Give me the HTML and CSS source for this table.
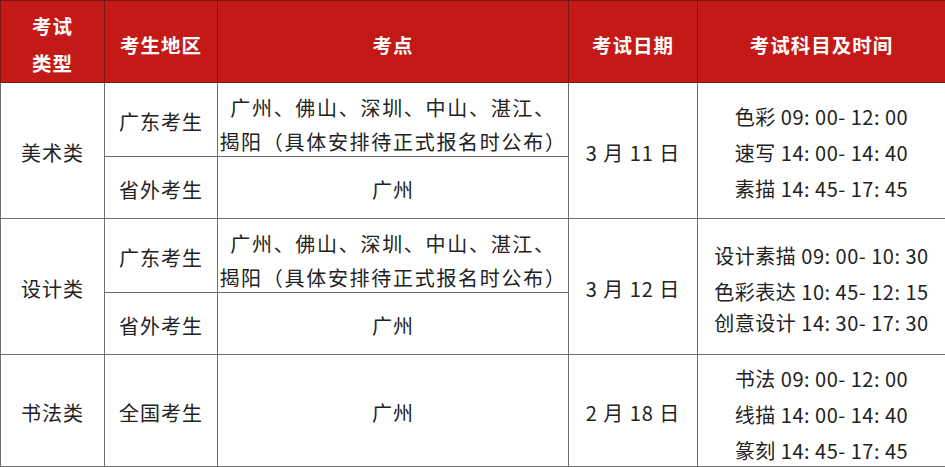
FILE: index.html
```html
<!DOCTYPE html>
<html lang="zh-CN">
<head>
<meta charset="utf-8">
<title>考试安排</title>
<link rel="stylesheet" href="styles.css">
</head>
<body>
<table class="exam">
  <colgroup>
    <col class="c1"><col class="c2"><col class="c3"><col class="c4"><col class="c5">
  </colgroup>
  <thead>
    <tr class="head">
      <th>考试<br>类型</th>
      <th>考生地区</th>
      <th>考点</th>
      <th>考试日期</th>
      <th>考试科目及时间</th>
    </tr>
  </thead>
  <tbody>
    <tr class="r-a">
      <td rowspan="2">美术类</td>
      <td>广东考生</td>
      <td class="place"><div class="pl">广州、佛山、深圳、中山、湛江、</div><div class="pl">揭阳（具体安排待正式报名时公布）</div></td>
      <td rowspan="2" class="date">3 月 11 日</td>
      <td rowspan="2" class="times">
        <div class="ln">色彩 09: 00- 12: 00</div>
        <div class="ln">速写 14: 00- 14: 40</div>
        <div class="ln">素描 14: 45- 17: 45</div>
      </td>
    </tr>
    <tr class="r-b">
      <td>省外考生</td>
      <td>广州</td>
    </tr>
    <tr class="r-a">
      <td rowspan="2">设计类</td>
      <td>广东考生</td>
      <td class="place"><div class="pl">广州、佛山、深圳、中山、湛江、</div><div class="pl">揭阳（具体安排待正式报名时公布）</div></td>
      <td rowspan="2" class="date">3 月 12 日</td>
      <td rowspan="2" class="times">
        <div class="ln">设计素描 09: 00- 10: 30</div>
        <div class="ln">色彩表达 10: 45- 12: 15</div>
        <div class="ln tight">创意设计 14: 30- 17: 30</div>
      </td>
    </tr>
    <tr class="r-b">
      <td>省外考生</td>
      <td>广州</td>
    </tr>
    <tr class="r-c">
      <td>书法类</td>
      <td>全国考生</td>
      <td>广州</td>
      <td class="date">2 月 18 日</td>
      <td class="times last">
        <div class="ln">书法 09: 00- 12: 00</div>
        <div class="ln">线描 14: 00- 14: 40</div>
        <div class="ln">篆刻 14: 45- 17: 45</div>
      </td>
    </tr>
  </tbody>
</table>
</body>
</html>
```

FILE: styles.css
```css
html, body {
  margin: 0;
  padding: 0;
  background: #ffffff;
}

.exam {
  width: 945px;
  table-layout: fixed;
  border-collapse: collapse;
  font-family: "Noto Sans CJK SC", "Noto Sans", sans-serif;
  font-size: 20px;
  color: #222222;
  letter-spacing: 1px;
}

.c1 { width: 104px; }
.c2 { width: 113px; }
.c3 { width: 351px; }
.c4 { width: 129px; }
.c5 { width: 248px; }

.exam th,
.exam td {
  border: 1px solid #6f6f6f;
  text-align: center;
  vertical-align: middle;
  padding: 5px 0 0 0;
  line-height: 36px;
  box-sizing: border-box;
}

.head th {
  background: #c31a17;
  color: #ffffff;
  font-weight: 700;
  height: 82px;
  border-color: #7a1312;
  line-height: 37px;
  font-size: 19.5px;
}

.r-a td { height: 73px; }
.r-b td { height: 62px; }
.r-c td { height: 112px; }

.place {
  padding-top: 0;
}

.pl {
  height: 34px;
  line-height: 34px;
  letter-spacing: 1.7px;
  white-space: nowrap;
  transform: translateY(3px);
}

.date {
  padding-top: 12px;
}

.times {
  padding-top: 8px;
}

.ln {
  height: 36px;
  line-height: 36px;
  letter-spacing: 0.5px;
}

.ln.tight {
  margin-top: -5px;
}

.times.last {
  padding-top: 0;
}

.times.last .ln {
  transform: translateY(4px);
}
```
